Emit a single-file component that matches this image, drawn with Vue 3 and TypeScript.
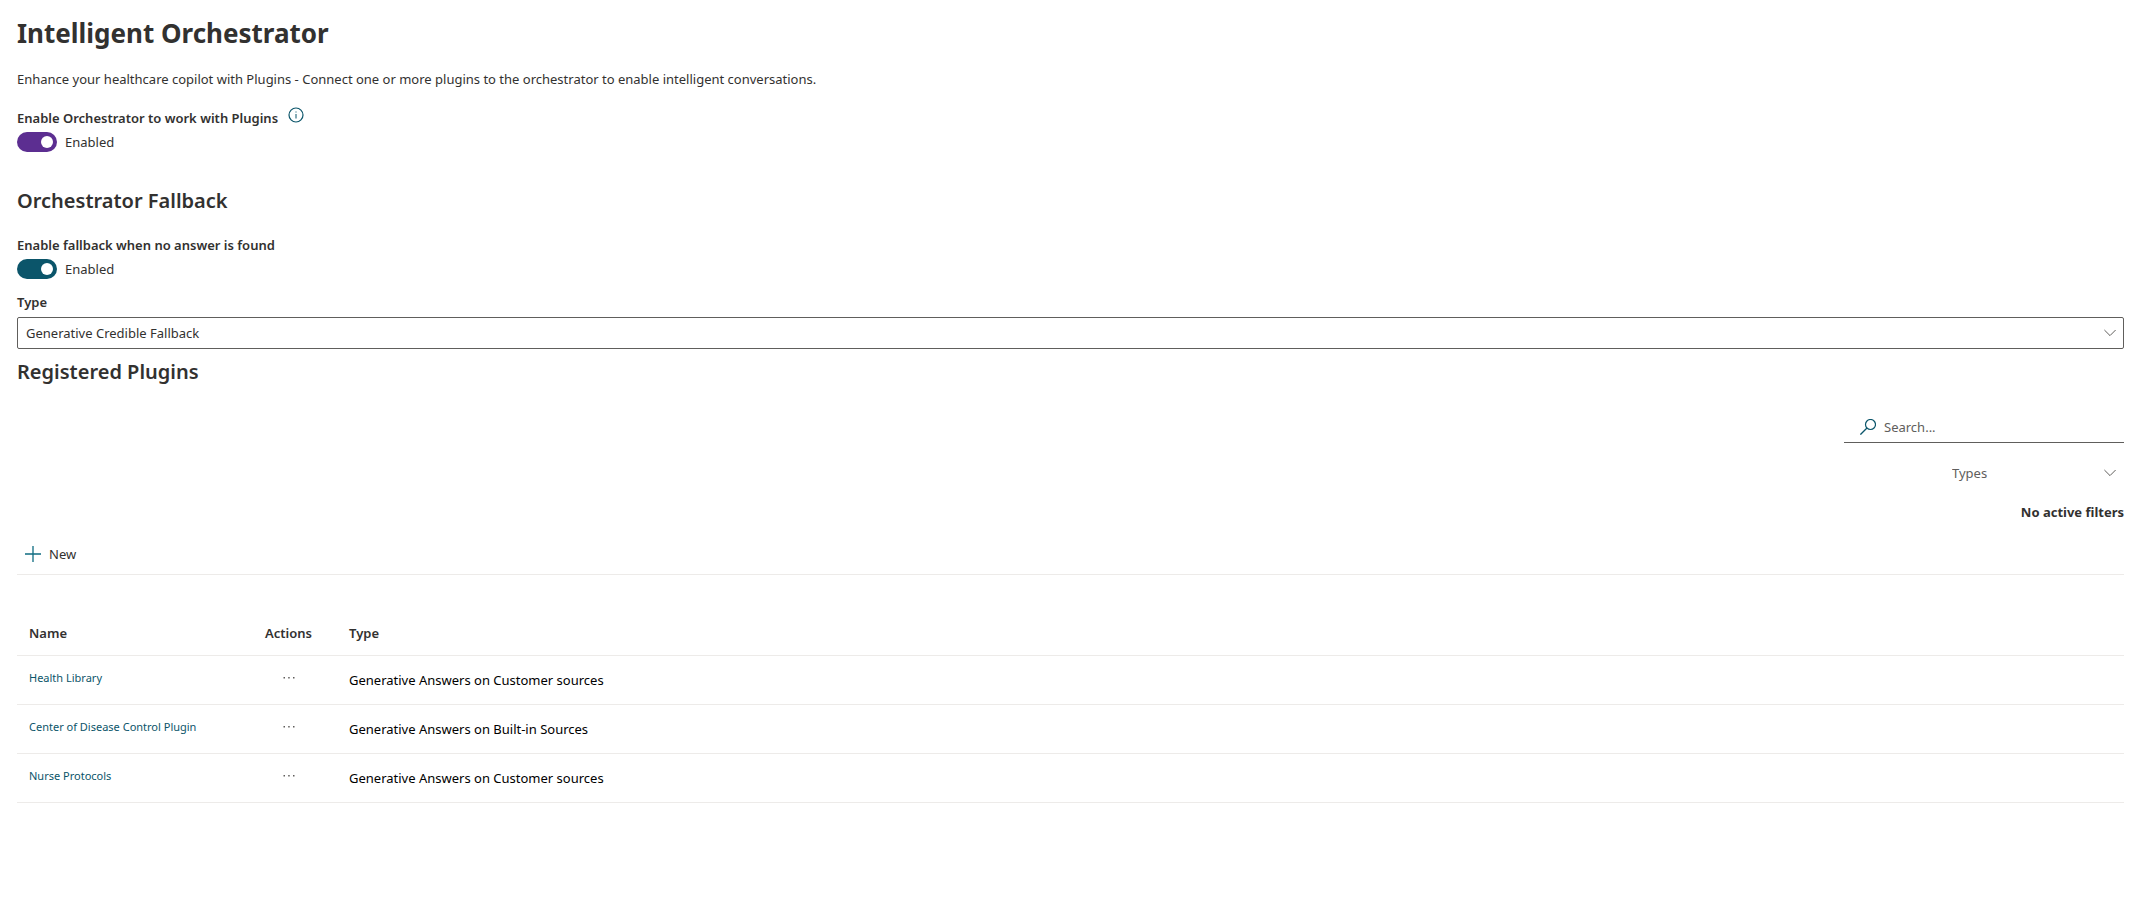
<script setup lang="ts">
import { computed, ref } from 'vue'

interface Plugin {
  name: string
  type: string
}

const orchestratorEnabled = ref(true)
const fallbackEnabled = ref(true)
const fallbackType = ref('Generative Credible Fallback')
const search = ref('')
const typeFilter = ref('')

const plugins: Plugin[] = [
  { name: 'Health Library', type: 'Generative Answers on Customer sources' },
  { name: 'Center of Disease Control Plugin', type: 'Generative Answers on Built-in Sources' },
  { name: 'Nurse Protocols', type: 'Generative Answers on Customer sources' },
]

const pluginTypes = [...new Set(plugins.map((p) => p.type))]

const visiblePlugins = computed(() =>
  plugins.filter(
    (p) =>
      p.name.toLowerCase().includes(search.value.toLowerCase()) &&
      (!typeFilter.value || p.type === typeFilter.value),
  ),
)
</script>

<template>
  <main class="page">
    <h1>Intelligent Orchestrator</h1>
    <p class="intro">
      Enhance your healthcare copilot with Plugins - Connect one or more plugins to the orchestrator to enable
      intelligent conversations.
    </p>

    <section class="setting">
      <div class="label-row">
        <label class="label" for="orchestrator">Enable Orchestrator to work with Plugins</label>
        <button class="info" type="button" aria-label="More information">
          <svg width="16" height="16" viewBox="0 0 16 16" fill="none">
            <circle cx="8" cy="8" r="7" stroke="currentColor" stroke-width="1.200" />
            <path d="M8 7v4.5" stroke="currentColor" />
            <path d="M8 4.5v1" stroke="currentColor" />
          </svg>
        </button>
      </div>
      <div class="toggle-row">
        <input id="orchestrator" v-model="orchestratorEnabled" class="toggle purple" type="checkbox" role="switch" />
        <span>{{ orchestratorEnabled ? 'Enabled' : 'Disabled' }}</span>
      </div>
    </section>

    <h2 class="fallback-title">Orchestrator Fallback</h2>
    <section class="setting fallback">
      <label class="label" for="fallback">Enable fallback when no answer is found</label>
      <div class="toggle-row">
        <input id="fallback" v-model="fallbackEnabled" class="toggle" type="checkbox" role="switch" />
        <span>{{ fallbackEnabled ? 'Enabled' : 'Disabled' }}</span>
      </div>
    </section>

    <section class="type-field">
      <label class="label" for="fallback-type">Type</label>
      <div class="select-wrap">
        <select id="fallback-type" v-model="fallbackType" class="boxed">
          <option>Generative Credible Fallback</option>
        </select>
        <svg class="chevron" width="12" height="8" viewBox="0 0 12 8" fill="none">
          <path d="M.4 1 6 6.600 11.600 1" stroke="currentColor" />
        </svg>
      </div>
    </section>

    <h2>Registered Plugins</h2>

    <section class="filters">
      <div class="search">
        <svg width="16" height="16" viewBox="0 0 16 16" fill="none">
          <circle cx="10.500" cy="5.500" r="5" stroke="currentColor" stroke-width="1.200" />
          <path d="M7 9 .4 15.600" stroke="currentColor" stroke-width="1.300" />
        </svg>
        <input v-model="search" type="text" placeholder="Search..." aria-label="Search" />
      </div>
      <div class="select-wrap types">
        <select v-model="typeFilter" aria-label="Types">
          <option value="">Types</option>
          <option v-for="t in pluginTypes" :key="t" :value="t">{{ t }}</option>
        </select>
        <svg class="chevron" width="12" height="8" viewBox="0 0 12 8" fill="none">
          <path d="M.4 1 6 6.600 11.600 1" stroke="currentColor" />
        </svg>
      </div>
      <strong class="active">{{ typeFilter || 'No active filters' }}</strong>
    </section>

    <div class="commands">
      <button class="new" type="button">
        <svg width="16" height="16" viewBox="0 0 16 16" fill="none">
          <path d="M8 0v16M0 8h16" stroke="currentColor" stroke-width="1.300" />
        </svg>
        <span>New</span>
      </button>
    </div>

    <table>
      <thead>
        <tr>
          <th class="col-name" scope="col">Name</th>
          <th class="col-actions" scope="col">Actions</th>
          <th scope="col">Type</th>
        </tr>
      </thead>
      <tbody>
        <tr v-for="plugin in visiblePlugins" :key="plugin.name">
          <td class="name"><a href="#">{{ plugin.name }}</a></td>
          <td class="actions">
            <button type="button" :aria-label="`Actions for ${plugin.name}`">
              <svg width="12" height="2" viewBox="0 0 12 2" fill="currentColor">
                <rect x="0.500" width="1.500" height="1.500" />
                <rect x="5.200" width="1.500" height="1.500" />
                <rect x="10" width="1.500" height="1.500" />
              </svg>
            </button>
          </td>
          <td>{{ plugin.type }}</td>
        </tr>
      </tbody>
    </table>
  </main>
</template>

<style>
body {
  margin: 0;
  background: #fff;
}
</style>

<style scoped>
.page {
  box-sizing: border-box;
  padding: 13px 29px 24px 17px;
  font-family: 'Segoe UI', 'Noto Sans', sans-serif;
  font-size: 13px;
  line-height: 20px;
  color: #323130;
}

h1,
h2,
p {
  margin: 0;
}

h1 {
  font-size: 26px;
  line-height: 40px;
  font-weight: 700;
}

h2 {
  font-size: 20px;
  line-height: 28px;
  font-weight: 600;
}

.intro {
  margin-top: 16px;
}

.setting {
  display: flex;
  flex-direction: column;
  margin-top: 16px;
}

.setting.fallback {
  margin-top: 20px;
}

.label {
  font-weight: 600;
}

.label-row {
  display: flex;
  gap: 10px;
  height: 23px;
  align-items: flex-end;
}

.info {
  display: flex;
  align-items: center;
  align-self: flex-start;
  height: 20px;
  padding: 0;
  border: 0;
  background: none;
  color: #0b556a;
}

.toggle-row {
  display: flex;
  align-items: center;
  gap: 8px;
  margin-top: 4px;
}

.toggle {
  appearance: none;
  display: flex;
  align-items: center;
  box-sizing: border-box;
  width: 40px;
  height: 20px;
  margin: 0;
  padding: 0 4px;
  border-radius: 10px;
  background: #8a8886;
}

.toggle::before {
  content: '';
  width: 12px;
  height: 12px;
  border-radius: 50%;
  background: #fff;
}

.toggle:checked {
  justify-content: flex-end;
  background: #0b556a;
}

.toggle.purple:checked {
  background: #5c2e91;
}

.fallback-title {
  margin-top: 35px;
}

.type-field {
  display: flex;
  flex-direction: column;
  gap: 5px;
  margin: 13px 0 9px;
}

.select-wrap {
  position: relative;
}

select {
  appearance: none;
  box-sizing: border-box;
  width: 100%;
  height: 32px;
  padding: 0 28px 0 8px;
  border: 0;
  border-radius: 2px;
  background: #fff;
  font: inherit;
  color: inherit;
}

.boxed {
  display: block;
  border: 1px solid #605e5c;
}

.chevron {
  position: absolute;
  right: 8px;
  top: 12px;
  color: #605e5c;
  pointer-events: none;
}

.filters {
  display: flex;
  flex-direction: column;
  align-items: flex-end;
  margin-top: 25px;
}

.search {
  display: flex;
  align-items: center;
  gap: 8px;
  box-sizing: border-box;
  width: 280px;
  height: 32px;
  padding: 0 0 0 16px;
  border-bottom: 1px solid #605e5c;
  color: #0b556a;
}

.search input {
  flex: 1;
  min-width: 0;
  padding: 0;
  border: 0;
  outline: 0;
  font: inherit;
  color: #323130;
}

.search input::placeholder {
  color: #605e5c;
  opacity: 1;
}

.types {
  width: 180px;
  margin-top: 14px;
  color: #605e5c;
}

.active {
  margin-top: 13px;
  font-weight: 700;
}

.commands {
  display: flex;
  margin-top: 22px;
  padding-bottom: 10px;
  border-bottom: 1px solid #edebe9;
}

.new {
  display: flex;
  align-items: center;
  gap: 8px;
  padding: 0 8px;
  border: 0;
  background: none;
  font: inherit;
  color: inherit;
}

.new svg {
  color: #0f6c81;
}

table {
  width: 100%;
  margin-top: 36px;
  border-collapse: collapse;
  table-layout: fixed;
}

th,
td {
  box-sizing: border-box;
  padding: 0 12px;
  border-bottom: 1px solid #edebe9;
  text-align: left;
}

th {
  height: 44px;
  font-weight: 600;
}

td {
  height: 49px;
  color: #000;
}

.col-name {
  width: 236px;
}

.col-actions {
  width: 84px;
}

.name {
  padding-bottom: 4px;
  font-size: 11px;
}

.name a {
  color: #0b556a;
  text-decoration: none;
}

.actions button {
  display: flex;
  justify-content: center;
  align-items: center;
  width: 48px;
  height: 20px;
  margin-bottom: 4px;
  padding: 0;
  border: 0;
  background: none;
  color: #605e5c;
}
</style>
